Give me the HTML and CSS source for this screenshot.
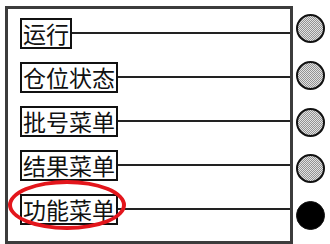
FILE: index.html
```html
<!DOCTYPE html>
<html>
<head>
<meta charset="utf-8">
<link rel="stylesheet" href="styles.css">
</head>
<body>
<div class="page">
  <div class="frame">
    <div class="row"><span class="label">运行</span><span class="line"></span></div>
    <div class="row"><span class="label">仓位状态</span><span class="line"></span></div>
    <div class="row"><span class="label">批号菜单</span><span class="line"></span></div>
    <div class="row"><span class="label">结果菜单</span><span class="line"></span></div>
    <div class="row"><span class="label">功能菜单<span class="ring"></span></span><span class="line"></span></div>
  </div>
  <div class="lamps">
    <span class="lamp"></span>
    <span class="lamp"></span>
    <span class="lamp"></span>
    <span class="lamp"></span>
    <span class="lamp on"></span>
  </div>
</div>
</body>
</html>
```
FILE: styles.css
```css
html, body {
  margin: 0;
  padding: 0;
  background: #ffffff;
}
.page {
  width: 330px;
  height: 244px;
  display: flex;
  align-items: flex-start;
  font-family: "Noto Sans CJK SC", "Noto Sans", sans-serif;
}
.frame {
  margin-left: 5px;
  margin-top: 6px;
  width: 282px;
  height: 226px;
  border: 3px solid #3c3c3c;
  padding: 2px 0 4px 0;
  box-sizing: content-box;
  display: grid;
  grid-template-rows: repeat(5, 44px);
}
.row {
  display: flex;
  align-items: center;
  padding-left: 12px;
}
.label {
  position: relative;
  border: 2px solid #111;
  font-size: 23px;
  line-height: 27px;
  padding: 0 1px;
  color: #111;
  white-space: nowrap;
}
.line {
  flex: 1;
  height: 2px;
  background: #222;
}
.ring {
  position: absolute;
  left: -14px;
  top: -16px;
  width: 110px;
  height: 42px;
  border: 4px solid #e3161c;
  border-radius: 50%;
}
.lamps {
  margin-left: 3px;
  margin-top: 14px;
  display: flex;
  flex-direction: column;
  gap: 17.8px;
}
.lamp {
  display: block;
  width: 25px;
  height: 25px;
  border: 2px solid #111;
  border-radius: 50%;
  background-color: #c0c0c0;
  background-image: repeating-conic-gradient(#939393 0 25%, #e2e2e2 0 50%);
  background-size: 2px 2px;
}
.lamp.on {
  background: #000;
  width: 27px;
  height: 27px;
  border-width: 1px;
}
```
